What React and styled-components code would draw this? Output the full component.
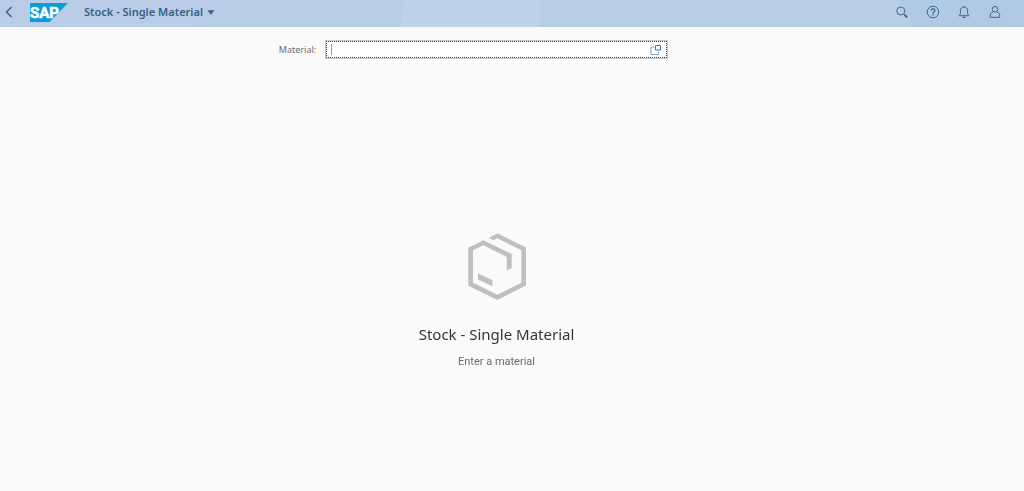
import React from "react";
import styled, { createGlobalStyle } from "styled-components";

const App = () => {
  return (
    <>
      <GlobalStyle />
      <Page>
        <ShellBar>
          <Backdrop viewBox="0 0 1024 27" preserveAspectRatio="none" aria-hidden="true">
            <path d="M0 0H260L190 27H0z" fill="#b9cee6" />
            <path d="M405 0H540L541 27H400z" fill="#bdd2e8" />
            <path d="M900 0H1024V27H914z" fill="#b1cae4" />
          </Backdrop>
          <BackButton aria-label="Back">
            <svg width="8" height="12" viewBox="0 0 8 12">
              <path d="M6.6 1L1.4 6l5.2 5" />
            </svg>
          </BackButton>
          <HomeLink href="#" aria-label="SAP home">
            <Logo />
          </HomeLink>
          <TitleButton>
            Stock - Single Material
            <svg width="8" height="5" viewBox="0 0 8 5">
              <path d="M0.3 0.2h7.2L3.9 4.8z" />
            </svg>
          </TitleButton>
          <Actions>
            <IconButton aria-label="Search">
              <svg width="14" height="14" viewBox="0 0 14 14">
                <circle cx="5.8" cy="6" r="4" />
                <path d="M8.7 9l1.2 1" />
                <path d="M9.7 9.9l2.5 2.3" strokeWidth="2" />
              </svg>
            </IconButton>
            <IconButton aria-label="Help">
              <svg width="14" height="14" viewBox="0 0 14 14">
                <circle cx="7" cy="7" r="5.8" />
                <path d="M5.1 5.6C5.1 4.4 5.9 3.8 7 3.8s1.9.6 1.9 1.7c0 1.3-1.8 1.4-1.8 2.9" strokeWidth="1.2" />
                <path d="M7.1 9.3v1.3" strokeWidth="1.3" />
              </svg>
            </IconButton>
            <IconButton aria-label="Notifications">
              <svg width="14" height="14" viewBox="0 0 14 14">
                <path d="M1.9 10.7c1-.8 1.6-1.5 1.6-3V5.3C3.5 3.2 4.9 2 7 2s3.5 1.2 3.5 3.3v2.4c0 1.5.6 2.2 1.6 3z" />
                <path d="M7 .8V2" />
                <path d="M5.7 12.3h2.6" strokeWidth="1.4" />
              </svg>
            </IconButton>
            <IconButton aria-label="User profile">
              <svg width="14" height="14" viewBox="0 0 14 14">
                <circle cx="7" cy="4.2" r="2.8" />
                <path d="M4.9 7.3C3 7.6 2.3 8.6 2.3 10v2.3h9.4V10c0-1.4-.7-2.4-2.6-2.7" />
              </svg>
            </IconButton>
          </Actions>
        </ShellBar>
        <Content>
          <FilterForm onSubmit={(e) => e.preventDefault()}>
            <label htmlFor="material">Material:</label>
            <Field>
              <input id="material" type="text" autoComplete="off" autoFocus />
              <ValueHelp type="button" aria-label="Select material">
                <svg width="12" height="12" viewBox="0 0 12 12">
                  <path d="M4.5 3H1v7.5h7.5V8" stroke="#7fa6c6" />
                  <path d="M5.5 1.5h5v4.500h-5z" stroke="#47789f" />
                </svg>
              </ValueHelp>
            </Field>
          </FilterForm>
          <Message>
            <ProductIcon />
            <h1>Stock - Single Material</h1>
            <p>Enter a material</p>
          </Message>
        </Content>
      </Page>
    </>
  );
};

const Logo = () => (
  <svg width="38" height="19" viewBox="0 0 38 19" aria-hidden="true">
    <path d="M0 0H38L19.5 19H0z" fill="#0a9ddb" />
    <text
      x="0"
      y="15"
      fill="#fff"
      stroke="#fff"
      strokeWidth="0.6"
      fontFamily="Liberation Sans Narrow, Roboto, Arial, sans-serif"
      fontWeight="700"
      fontSize="15"
    >
      SAP
    </text>
  </svg>
);

const ProductIcon = () => (
  <svg width="58" height="68" viewBox="0 0 58 68" aria-hidden="true">
    <g fill="#bfbfbf">
      <path
        fillRule="evenodd"
        d="M20.5 5L29.3.3 58 14.500V52.500L29.300 67 .3 52.800V14.700L15.300 7.200 43.700 21v14l-4.900 2.600V24L15.300 12.200 5 17.300v32.500l24.300 12 24-12V17.300L29.300 5.300 25.600 7.200z"
      />
      <path d="M10 40.500l14.500 6.700v6L10 46.500z" />
    </g>
  </svg>
);

//Styled Components
const GlobalStyle = createGlobalStyle`
  * {
    box-sizing: border-box;
  }
  body {
    margin: 0;
    background: #fafafa;
    font-family: "Noto Sans", "Open Sans", sans-serif;
  }
  button, input {
    font-family: inherit;
  }
`;

const Page = styled.div`
  min-height: 100vh;
  display: flex;
  flex-direction: column;
`;

const ShellBar = styled.header`
  position: relative;
  display: flex;
  align-items: center;
  height: 27px;
  padding: 0 22px 3px 3px;
  background: #b6cde4;
`;

const Backdrop = styled.svg`
  position: absolute;
  inset: 0;
  width: 100%;
  height: 100%;
`;

const PlainButton = styled.button`
  position: relative;
  display: flex;
  align-items: center;
  justify-content: center;
  padding: 0;
  border: 0;
  background: none;
  color: #346187;
  cursor: pointer;
  svg {
    fill: none;
    stroke: currentColor;
  }
`;

const BackButton = styled(PlainButton)`
  width: 12px;
  height: 24px;
  svg {
    stroke-width: 1.4;
  }
`;

const HomeLink = styled.a`
  position: relative;
  display: flex;
  margin: 0 16px 0 15px;
`;

const TitleButton = styled(PlainButton)`
  gap: 4px;
  font-size: 11px;
  font-weight: 600;
  line-height: 16px;
  svg {
    fill: currentColor;
    stroke: none;
  }
`;

const Actions = styled.div`
  display: flex;
  gap: 17px;
  margin-left: auto;
`;

const IconButton = styled(PlainButton)`
  width: 14px;
  height: 24px;
  svg {
    stroke-width: 0.9;
  }
`;

const Content = styled.main`
  flex: 1;
  display: flex;
  flex-direction: column;
  padding: 13px 31px 0 0;
`;

const FilterForm = styled.form`
  display: grid;
  grid-template-columns: 12fr 13fr 12fr;
  column-gap: 9px;
  align-items: center;
  label {
    color: #6a6d70;
    font-size: 9px;
    line-height: 16px;
    text-align: right;
  }
`;

const Field = styled.div`
  display: flex;
  height: 19px;
  padding: 0 4px 0 0;
  border: 1px solid #c8c8c8;
  outline: 1px dotted #333;
  outline-offset: -2px;
  background: #fff;
  input {
    flex: 1;
    min-width: 0;
    padding: 0 6px;
    border: 0;
    outline: 0;
    background: linear-gradient(#999, #999) 5px center / 1px 11px no-repeat;
    color: #32363a;
    caret-color: transparent;
    font-size: 10px;
  }
`;

const ValueHelp = styled(PlainButton)`
  width: 14px;
`;

const Message = styled.section`
  flex: 1;
  display: flex;
  flex-direction: column;
  align-items: center;
  justify-content: center;
  padding-bottom: 56px;
  margin-top: 109px;
  h1 {
    margin: 21px 0 8px;
    color: #32363a;
    font-size: 15px;
    font-weight: 400;
    line-height: 24px;
  }
  p {
    margin: 0;
    color: #6a6d70;
    font-family: Roboto, "Noto Sans", sans-serif;
    font-size: 11px;
    line-height: 16px;
  }
`;

export default App;
